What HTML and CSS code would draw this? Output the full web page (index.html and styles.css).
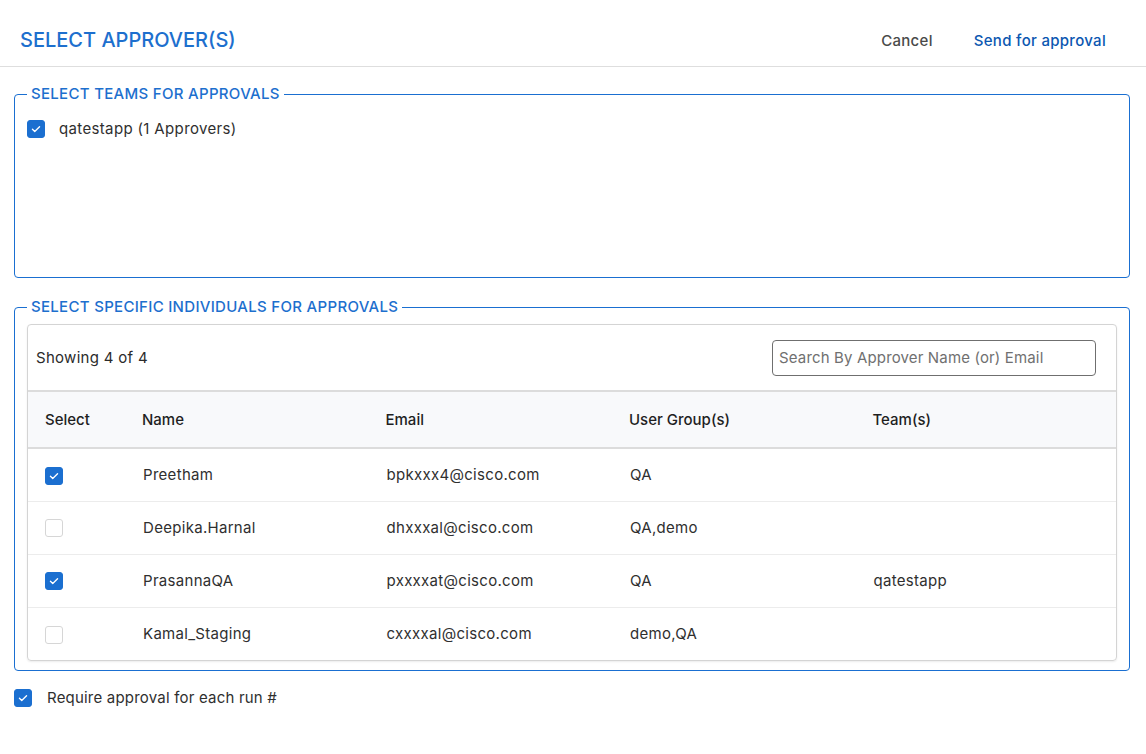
FILE: index.html
```html
<!DOCTYPE html>
<html>
<head>
<meta charset="utf-8">
<link rel="stylesheet" href="styles.css">
</head>
<body>
<header class="topbar">
  <h1 class="title">SELECT APPROVER(S)</h1>
  <div class="actions">
    <button class="btn btn-cancel">Cancel</button>
    <button class="btn btn-send">Send for approval</button>
  </div>
</header>

<main class="content">
  <fieldset class="group group-teams">
    <legend>SELECT TEAMS FOR APPROVALS</legend>
    <label class="check-row">
      <span class="cb checked"><svg viewBox="0 0 18 18"><path d="M5 9.2l2.6 2.6L13 6.4" /></svg></span>
      <span>qatestapp (1 Approvers)</span>
    </label>
  </fieldset>

  <fieldset class="group group-individuals">
    <legend>SELECT SPECIFIC INDIVIDUALS FOR APPROVALS</legend>
    <div class="card">
      <div class="toolbar">
        <span class="count">Showing 4 of 4</span>
        <input class="search" type="text" placeholder="Search By Approver Name (or) Email">
      </div>
      <table class="grid">
        <thead>
          <tr>
            <th class="c-sel">Select</th>
            <th class="c-col">Name</th>
            <th class="c-col">Email</th>
            <th class="c-col">User Group(s)</th>
            <th class="c-col">Team(s)</th>
          </tr>
        </thead>
        <tbody>
          <tr>
            <td class="c-sel"><span class="cb checked"><svg viewBox="0 0 18 18"><path d="M5 9.2l2.6 2.6L13 6.4" /></svg></span></td>
            <td class="c-col">Preetham</td>
            <td class="c-col">bpkxxx4@cisco.com</td>
            <td class="c-col">QA</td>
            <td class="c-col"></td>
          </tr>
          <tr>
            <td class="c-sel"><span class="cb"></span></td>
            <td class="c-col">Deepika.Harnal</td>
            <td class="c-col">dhxxxal@cisco.com</td>
            <td class="c-col">QA,demo</td>
            <td class="c-col"></td>
          </tr>
          <tr>
            <td class="c-sel"><span class="cb checked"><svg viewBox="0 0 18 18"><path d="M5 9.2l2.6 2.6L13 6.4" /></svg></span></td>
            <td class="c-col">PrasannaQA</td>
            <td class="c-col">pxxxxat@cisco.com</td>
            <td class="c-col">QA</td>
            <td class="c-col">qatestapp</td>
          </tr>
          <tr>
            <td class="c-sel"><span class="cb"></span></td>
            <td class="c-col">Kamal_Staging</td>
            <td class="c-col">cxxxxal@cisco.com</td>
            <td class="c-col">demo,QA</td>
            <td class="c-col"></td>
          </tr>
        </tbody>
      </table>
    </div>
  </fieldset>

  <label class="check-row require">
    <span class="cb checked"><svg viewBox="0 0 18 18"><path d="M5 9.2l2.6 2.6L13 6.4" /></svg></span>
    <span>Require approval for each run #</span>
  </label>
</main>
</body>
</html>
```

FILE: styles.css
```css
* { box-sizing: border-box; }

html, body {
  margin: 0;
  padding: 0;
  background: #ffffff;
  font-family: Inter, "Noto Sans", "Liberation Sans", sans-serif;
  color: #2b2b2b;
}

.topbar {
  height: 67px;
  display: flex;
  align-items: center;
  justify-content: space-between;
  padding: 12px 20px 0 20px;
  border-bottom: 1px solid #dedede;
}

.title {
  margin: 0;
  font-size: 20px;
  font-weight: 500;
  color: #1d6fce;
  letter-spacing: 0;
  padding-top: 1px;
}

.actions {
  display: flex;
  align-items: center;
  gap: 41px;
  padding-right: 20px;
  padding-top: 3px;
}

.btn {
  border: 0;
  background: none;
  padding: 0;
  font-family: inherit;
  font-size: 15px;
  font-weight: 500;
  letter-spacing: 0.3px;
  cursor: pointer;
}

.btn-cancel { color: #4a4a4a; }
.btn-send { color: #0b57b1; }

.content {
  padding: 17px 16px 0 14px;
}

.group {
  margin: 0;
  border: 1px solid #1a6fd1;
  border-radius: 4px;
  padding: 0 12px;
}

.group legend {
  padding: 0 4px;
  font-size: 15px;
  line-height: 20px;
  font-weight: 500;
  color: #1d6fce;
  letter-spacing: 0.3px;
}

.group-teams {
  height: 194px;
  padding-top: 15px;
}

.group-individuals {
  margin-top: 19px;
  padding-top: 7px;
  padding-bottom: 9px;
}

.check-row {
  display: flex;
  align-items: center;
  gap: 14px;
  font-size: 15px;
  letter-spacing: 0.35px;
  color: #2f2f2f;
}

.cb {
  width: 18px;
  height: 18px;
  border-radius: 3px;
  border: 1px solid #d6d6d6;
  background: #fff;
  display: inline-flex;
  align-items: center;
  justify-content: center;
  flex: none;
}

.cb.checked {
  background: #1b6fd0;
  border-color: #1b6fd0;
}

.cb svg {
  width: 18px;
  height: 18px;
  fill: none;
  stroke: #ffffff;
  stroke-width: 1.5;
  stroke-linecap: round;
  stroke-linejoin: round;
}

.card {
  border: 1px solid #d4d4d4;
  border-radius: 4px;
  box-shadow: 0 1px 2px rgba(0,0,0,0.08);
  overflow: hidden;
}

.toolbar {
  height: 65px;
  display: flex;
  align-items: center;
  justify-content: space-between;
  padding: 0 20px 0 8px;
}

.count {
  font-size: 15px;
  letter-spacing: 0.3px;
  color: #2b2b2b;
}

.search {
  width: 324px;
  height: 36px;
  border: 1px solid #6f6f6f;
  border-radius: 4px;
  padding: 0 6px;
  font-family: inherit;
  font-size: 15px;
  letter-spacing: 0.15px;
  color: #333;
}

.search::placeholder { color: #707070; }

.grid {
  width: 100%;
  border-collapse: collapse;
  table-layout: fixed;
}

.grid th {
  background: #f8f9fb;
  border-top: 2px solid #dcdcdc;
  border-bottom: 2px solid #dcdcdc;
  height: 57px;
  text-align: left;
  font-size: 15px;
  font-weight: 500;
  color: #1f1f1f;
  padding: 0;
}

.grid td {
  height: 53px;
  font-size: 15px;
  letter-spacing: 0.3px;
  color: #2f2f2f;
  padding: 0;
  border-bottom: 1px solid #ececec;
}

.grid tbody tr:last-child td { border-bottom: 0; }

.grid .c-sel {
  width: 114px;
  padding-left: 17px;
}

.grid th.c-col { padding-left: 0; }
.grid td.c-col { padding-left: 1px; }

.grid td.c-sel .cb { vertical-align: middle; }

.require {
  margin-top: 17px;
  gap: 15px;
  letter-spacing: 0.2px;
}
```
